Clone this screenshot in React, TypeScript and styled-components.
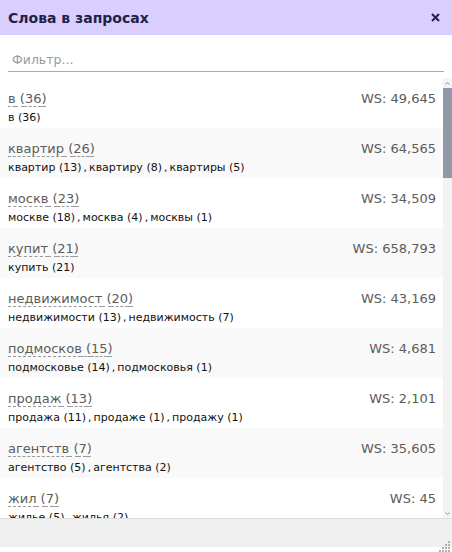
import styled, { createGlobalStyle } from 'styled-components'

interface WordForm {
  text: string
  count: number
}

interface WordRow {
  stem: string
  count: number
  ws: string
  forms: WordForm[]
}

const ROWS: WordRow[] = [
  { stem: 'в', count: 36, ws: '49,645', forms: [{ text: 'в', count: 36 }] },
  {
    stem: 'квартир',
    count: 26,
    ws: '64,565',
    forms: [
      { text: 'квартир', count: 13 },
      { text: 'квартиру', count: 8 },
      { text: 'квартиры', count: 5 }
    ]
  },
  {
    stem: 'москв',
    count: 23,
    ws: '34,509',
    forms: [
      { text: 'москве', count: 18 },
      { text: 'москва', count: 4 },
      { text: 'москвы', count: 1 }
    ]
  },
  { stem: 'купит', count: 21, ws: '658,793', forms: [{ text: 'купить', count: 21 }] },
  {
    stem: 'недвижимост',
    count: 20,
    ws: '43,169',
    forms: [
      { text: 'недвижимости', count: 13 },
      { text: 'недвижимость', count: 7 }
    ]
  },
  {
    stem: 'подмосков',
    count: 15,
    ws: '4,681',
    forms: [
      { text: 'подмосковье', count: 14 },
      { text: 'подмосковья', count: 1 }
    ]
  },
  {
    stem: 'продаж',
    count: 13,
    ws: '2,101',
    forms: [
      { text: 'продажа', count: 11 },
      { text: 'продаже', count: 1 },
      { text: 'продажу', count: 1 }
    ]
  },
  {
    stem: 'агентств',
    count: 7,
    ws: '35,605',
    forms: [
      { text: 'агентство', count: 5 },
      { text: 'агентства', count: 2 }
    ]
  },
  {
    stem: 'жил',
    count: 7,
    ws: '45',
    forms: [
      { text: 'жилье', count: 5 },
      { text: 'жилья', count: 2 }
    ]
  }
]

const GlobalStyle = createGlobalStyle`
  html, body {
    margin: 0;
    padding: 0;
    background: #ffffff;
  }
  body {
    font-family: "DejaVu Sans", Verdana, sans-serif;
  }
`

const Panel = styled.div`
  width: 452px;
  height: 552px;
  display: flex;
  flex-direction: column;
  background: #ffffff;
  overflow: hidden;
`

const Header = styled.div`
  height: 35px;
  flex-shrink: 0;
  display: flex;
  align-items: center;
  justify-content: space-between;
  padding: 0 10px 0 8px;
  background: #d9cefd;
  box-sizing: border-box;
`

const Title = styled.h2`
  margin: 0;
  font-size: 14px;
  font-weight: bold;
  color: #1f2248;
`

const CloseButton = styled.button`
  border: none;
  background: none;
  padding: 0;
  width: 14px;
  height: 14px;
  display: flex;
  align-items: center;
  justify-content: center;
  cursor: pointer;
`

const FilterWrap = styled.div`
  flex-shrink: 0;
  padding: 13px 8px 6px;
`

const FilterInput = styled.input`
  display: block;
  width: 100%;
  box-sizing: border-box;
  height: 24px;
  border: none;
  border-bottom: 1px solid #a9a9a9;
  outline: none;
  padding: 0 4px;
  font-family: "DejaVu Sans", Verdana, sans-serif;
  font-size: 12.5px;
  color: #333;
  background: transparent;

  &::placeholder {
    color: #9a9a9a;
  }
`

const ListArea = styled.div`
  flex: 1;
  min-height: 0;
  display: flex;
`

const List = styled.ul`
  flex: 1;
  min-width: 0;
  margin: 0;
  padding: 0;
  list-style: none;
  overflow: hidden;
`

const ScrollTrack = styled.div`
  width: 9px;
  flex-shrink: 0;
  display: flex;
  flex-direction: column;
  background: #f3f3f3;
`

const ScrollArrow = styled.div`
  height: 10px;
  display: flex;
  align-items: center;
  justify-content: center;
`

const ScrollThumb = styled.div`
  height: 90px;
  background: #8f99a7;
`

const ScrollRest = styled.div`
  flex: 1;
`

const Row = styled.li<{ $shaded: boolean }>`
  height: 50px;
  box-sizing: border-box;
  padding: 12px 7px 0 8px;
  background: ${p => (p.$shaded ? '#f9f9f9' : '#ffffff')};
`

const TopLine = styled.div`
  display: flex;
  justify-content: space-between;
  align-items: baseline;
  height: 18px;
  line-height: 18px;
  font-size: 13px;
  color: #5c5c5c;
`

const Stem = styled.span`
  text-decoration: underline dashed #9a9a9a;
  text-decoration-thickness: 1px;
  text-underline-offset: 3px;
  cursor: pointer;
`

const Ws = styled.span`
  white-space: nowrap;
`

const Forms = styled.div`
  margin-top: 2px;
  height: 16px;
  line-height: 16px;
  font-size: 11px;
  color: #111111;
  white-space: nowrap;
`

const Sep = styled.span`
  margin: 0 2px 0 2px;
`

const Footer = styled.div`
  height: 28px;
  flex-shrink: 0;
  display: flex;
  justify-content: flex-end;
  align-items: flex-end;
  background: #f0f0f0;
  border-top: 1px solid #dddddd;
  margin-bottom: 5px;
  overflow: visible;
`

const Grip = styled.svg`
  margin: 0 1px -5px 0;
`

const App = () => (
  <>
    <GlobalStyle />
    <Panel>
      <Header>
        <Title>Слова в запросах</Title>
        <CloseButton aria-label="Закрыть">
          <svg width="9" height="9" viewBox="0 0 9 9">
            <path d="M1 1 L8 8 M8 1 L1 8" stroke="#1f2248" strokeWidth="2" />
          </svg>
        </CloseButton>
      </Header>
      <FilterWrap>
        <FilterInput placeholder="Фильтр..." />
      </FilterWrap>
      <ListArea>
        <List>
          {ROWS.map((row, index) => (
            <Row key={row.stem} $shaded={index % 2 === 1}>
              <TopLine>
                <Stem>
                  {row.stem} ({row.count})
                </Stem>
                <Ws>WS: {row.ws}</Ws>
              </TopLine>
              <Forms>
                {row.forms.map((form, i) => (
                  <span key={form.text}>
                    {i > 0 && <Sep>,</Sep>}
                    {form.text} ({form.count})
                  </span>
                ))}
              </Forms>
            </Row>
          ))}
        </List>
        <ScrollTrack>
          <ScrollArrow>
            <svg width="5" height="3" viewBox="0 0 5 3">
              <path d="M0.5 2.5 L2.5 0.5 L4.5 2.5" fill="none" stroke="#8a8a8a" />
            </svg>
          </ScrollArrow>
          <ScrollThumb />
          <ScrollRest />
          <ScrollArrow>
            <svg width="5" height="3" viewBox="0 0 5 3">
              <path d="M0.5 0.5 L2.5 2.5 L4.5 0.5" fill="none" stroke="#8a8a8a" />
            </svg>
          </ScrollArrow>
        </ScrollTrack>
      </ListArea>
      <Footer>
        <Grip width="12" height="12" viewBox="0 0 12 12">
          {[
            [9, 1], [9, 4], [6, 4], [9, 7], [6, 7], [3, 7], [9, 10], [6, 10], [3, 10], [0, 10]
          ].map(([x, y]) => (
            <rect key={`${x}-${y}`} x={x} y={y} width="2" height="2" fill="#b0b0b0" />
          ))}
        </Grip>
      </Footer>
    </Panel>
  </>
)

export default App
